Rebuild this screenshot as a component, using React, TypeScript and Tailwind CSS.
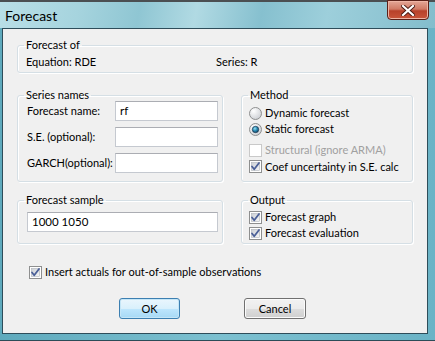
import React from "react";

const font = { fontFamily: 'Lato, "Noto Sans", sans-serif' };

function CheckBox({ checked, disabled }: { checked?: boolean; disabled?: boolean }) {
  return (
    <svg width="13" height="13" viewBox="0 0 13 13" className="shrink-0">
      <defs>
        <linearGradient id="cbg" x1="0" y1="0" x2="1" y2="1">
          <stop offset="0" stopColor="#cbcfd5" />
          <stop offset="1" stopColor="#f6f6f6" />
        </linearGradient>
      </defs>
      <rect x="0.5" y="0.5" width="12" height="12" fill="#fff" stroke={disabled ? "#c9c9c9" : "#8e8f8f"} />
      {!disabled && <rect x="2.5" y="2.5" width="8" height="8" fill="url(#cbg)" stroke="#aeb3b9" strokeWidth="0.6" />}
      {checked && (
        <path d="M3 6.5 L5.2 9.2 L10 3" fill="none" stroke="#4a5f97" strokeWidth="1.8" strokeLinecap="round" strokeLinejoin="round" />
      )}
    </svg>
  );
}

function Radio({ checked }: { checked?: boolean }) {
  return (
    <svg width="13" height="13" viewBox="0 0 13 13" className="shrink-0">
      <defs>
        <radialGradient id="rg" cx="0.35" cy="0.3" r="0.8">
          <stop offset="0" stopColor="#ffffff" />
          <stop offset="1" stopColor="#c9ccd1" />
        </radialGradient>
        <radialGradient id="rdot" cx="0.4" cy="0.35" r="0.7">
          <stop offset="0" stopColor="#9be2f5" />
          <stop offset="0.5" stopColor="#2a8cb4" />
          <stop offset="1" stopColor="#10405e" />
        </radialGradient>
      </defs>
      <circle cx="6.5" cy="6.5" r="6" fill="url(#rg)" stroke="#8e8f8f" />
      {checked && <circle cx="6.5" cy="6.5" r="3.2" fill="url(#rdot)" stroke="#1b3550" strokeWidth="0.7" />}
    </svg>
  );
}

function Input({ value, className = "" }: { value?: string; className?: string }) {
  return (
    <div
      className={
        "h-[20px] bg-white border border-[#c5c9d0] border-t-[#abadb3] flex items-center px-[4px] text-[11.5px] text-black " +
        className
      }
    >
      {value}
    </div>
  );
}

function Group({
  title,
  className = "",
  children,
}: {
  title: string;
  className?: string;
  children: React.ReactNode;
}) {
  return (
    <fieldset
      className={
        "border border-[#d5dfe5] rounded-[3px] shadow-[inset_1px_1px_0_#ffffff,1px_1px_0_#ffffff] " + className
      }
    >
      <legend className="ml-[6px] px-[2px] leading-[14px] text-[11px] text-black">{title}</legend>
      {children}
    </fieldset>
  );
}

function Button({ label, primary }: { label: string; primary?: boolean }) {
  return (
    <div
      className={
        "h-[21px] flex items-center justify-center rounded-[3px] border text-[11px] text-black " +
        (primary
          ? "border-[#3c7fb1] bg-[linear-gradient(#eaf6fd_0%,#d9f0fc_50%,#bee6fd_51%,#a7d9f5_100%)] shadow-[inset_0_0_0_1px_#c5e6f7]"
          : "border-[#707070] bg-[linear-gradient(#f2f2f2_0%,#ebebeb_50%,#dddddd_51%,#cfcfcf_100%)] shadow-[inset_0_0_0_1px_#fbfbfb]")
      }
    >
      {label}
    </div>
  );
}

export default function App() {
  return (
    <div
      className="w-[435px] h-[341px] flex flex-col overflow-hidden bg-[linear-gradient(90deg,#5faabd_0%,#7cc0d0_50%,#6ab3c6_100%)] border-b border-[#2c4c58]"
      style={font}
    >
      <div className="h-[2px] bg-[#4b4f52]" />
      <div className="h-[26px] flex items-start bg-[linear-gradient(100deg,#b9dfe7_0%,#a6d4de_18%,#8fc6d3_32%,#b1dae3_45%,#86c0cf_60%,#9dcfdb_75%,#83bdcc_100%)]">
        <div className="pl-[5px] pt-[4px] text-[14px] leading-[20px] text-black">Forecast</div>
        <div className="flex-1" />
        <div className="mr-[6px] -mt-[2px] w-[42px] h-[20px] rounded-b-[4px] border border-[#5a2018] bg-[linear-gradient(#e4a797_0%,#d07a65_45%,#b8412a_55%,#c9553a_100%)] shadow-[inset_0_0_0_1px_#eeb4a4] flex items-center justify-center">
          <svg width="14" height="11" viewBox="0 0 14 11">
            <path d="M2 1 L12 10 M12 1 L2 10" stroke="#4a1a12" strokeWidth="4" strokeLinecap="square" />
            <path d="M2 1 L12 10 M12 1 L2 10" stroke="#ffffff" strokeWidth="2.2" strokeLinecap="square" />
          </svg>
        </div>
      </div>
      <div className="flex-1 flex pl-[2px] pr-[7px] pb-[6px]">
        <div className="flex-1 border border-[#2e4d5a] bg-[#f0f0f0] flex flex-col px-[14px] pt-[9px] text-[11px] text-black leading-[14px]">
          <Group title="Forecast of">
            <div className="flex pt-[3px] pb-[3px] pl-[8px]">
              <div className="w-[190px]">Equation: RDE</div>
              <div>Series: R</div>
            </div>
          </Group>

          <div className="mt-[15px] flex gap-[18px]">
            <Group title="Series names" className="w-[206px]">
              <div className="-mt-[1px] pl-[9px] pr-[4px] pb-[7px] flex flex-col gap-[6px]">
                <div className="flex items-center">
                  <div className="w-[88px]">Forecast name:</div>
                  <Input value="rf" className="flex-1" />
                </div>
                <div className="flex items-center">
                  <div className="w-[88px]">S.E. (optional):</div>
                  <Input className="flex-1" />
                </div>
                <div className="flex items-center">
                  <div className="w-[88px]">GARCH(optional):</div>
                  <Input className="flex-1" />
                </div>
              </div>
            </Group>
            <Group title="Method" className="flex-1">
              <div className="mt-[3px] pl-[7px] pb-[6px] flex flex-col">
                <div className="h-[16px] flex items-center gap-[3px]">
                  <Radio />
                  <span>Dynamic forecast</span>
                </div>
                <div className="h-[16px] flex items-center gap-[3px]">
                  <Radio checked />
                  <span>Static forecast</span>
                </div>
                <div className="mt-[5px] h-[16px] flex items-center gap-[3px]">
                  <CheckBox disabled />
                  <span className="text-[#a0a0a0]">Structural (ignore ARMA)</span>
                </div>
                <div className="h-[17px] flex items-center gap-[3px]">
                  <CheckBox checked />
                  <span>Coef uncertainty in S.E. calc</span>
                </div>
              </div>
            </Group>
          </div>

          <div className="mt-[11px] flex gap-[18px]">
            <Group title="Forecast sample" className="w-[206px]">
              <div className="pl-[9px] pr-[4px] pb-[10px] pt-[5px]">
                <Input value="1000 1050" />
              </div>
            </Group>
            <Group title="Output" className="flex-1">
              <div className="mt-[2px] pl-[7px] pb-[2px] flex flex-col">
                <div className="h-[16px] flex items-center gap-[3px]">
                  <CheckBox checked />
                  <span>Forecast graph</span>
                </div>
                <div className="h-[16px] flex items-center gap-[3px]">
                  <CheckBox checked />
                  <span>Forecast evaluation</span>
                </div>
              </div>
            </Group>
          </div>

          <div className="mt-[20px] ml-[12px] h-[16px] flex items-center gap-[3px]">
            <CheckBox checked />
            <span>Insert actuals for out-of-sample observations</span>
          </div>

          <div className="mt-[18px] ml-[102px] flex gap-[64px]">
            <div className="w-[61px]">
              <Button label="OK" primary />
            </div>
            <div className="w-[62px]">
              <Button label="Cancel" />
            </div>
          </div>
        </div>
      </div>
    </div>
  );
}
